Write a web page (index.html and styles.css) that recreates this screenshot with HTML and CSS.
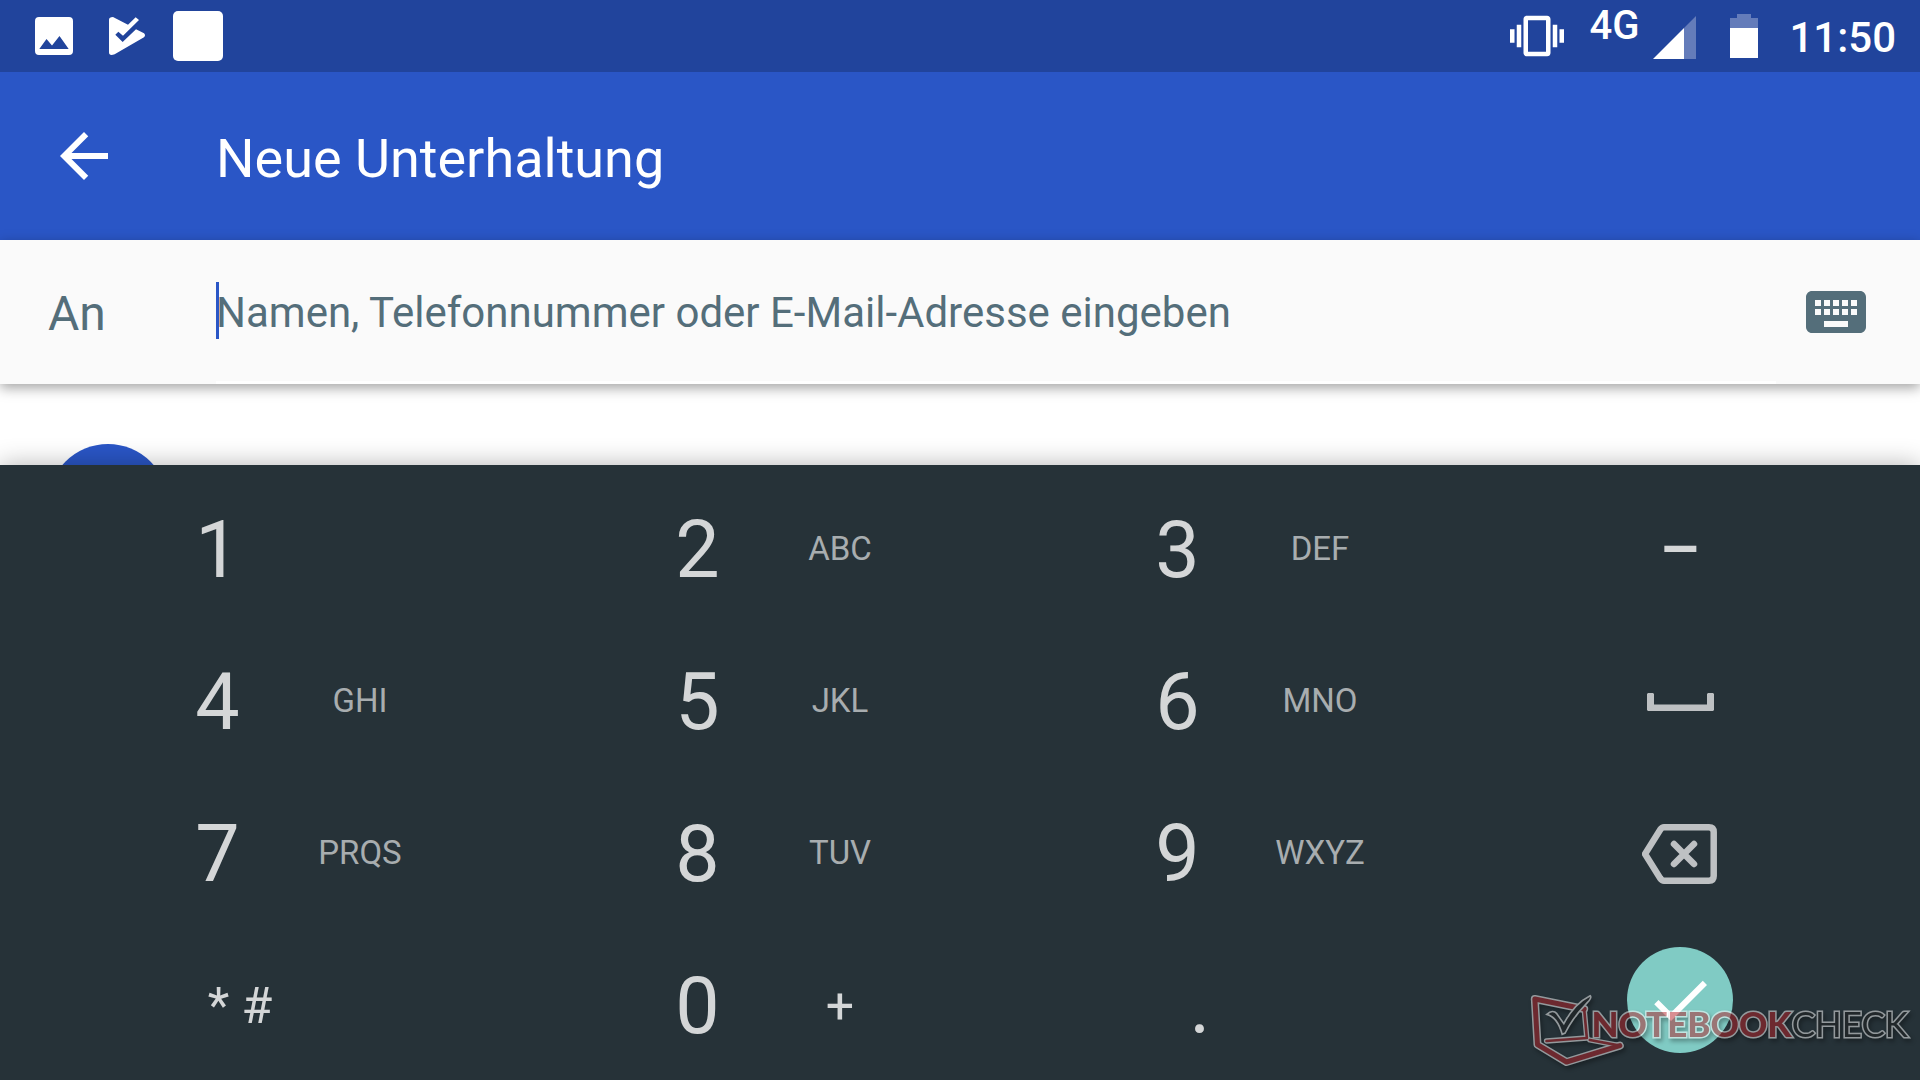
FILE: index.html
```
<!DOCTYPE html>
<html lang="de">
<head>
    <meta charset="UTF-8">
    <meta name="viewport" content="width=device-width, initial-scale=1.0">
    <title>Neue Unterhaltung</title>
    <link rel="stylesheet" href="styles.css">
</head>
<body>
    <div class="status-bar">
        <div class="notifications">
            <svg width="38" height="38" viewBox="0 0 38 38">
                <path fill="#fff" fill-rule="evenodd" d="M4 0h30q4 0 4 4v30q0 4-4 4H4q-4 0-4-4V4q0-4 4-4zM4.300 32H33.700L24.500 19 17 28.500 11.500 22z"/>
            </svg>
            <svg width="36" height="38" viewBox="0 0 108 114">
                <path fill="#fff" d="M0 8Q0 0 12 0L57 23 80 1 90 9 42 56 28 44 19 53 41 75 81 37 105 49Q111 55 105 61L17 112Q0 118 0 106z"/>
            </svg>
            <span class="blank-icon"></span>
        </div>
        <div class="system">
            <svg class="vibrate" width="54" height="54" viewBox="0 0 24 24">
                <path fill="#fff" d="M0 15h2V9H0v6zm3 2h2V7H3v10zm19-8v6h2V9h-2zm-3 8h2V7h-2v10zM16.500 3h-9C6.670 3 6 3.670 6 4.500v15c0 .83.670 1.500 1.500 1.500h9c.83 0 1.500-.67 1.500-1.500v-15c0-.83-.67-1.500-1.500-1.500zM16 19H8V5h8v14z"/>
            </svg>
            <span class="network">4G</span>
            <svg class="signal" width="43" height="43" viewBox="0 0 43 43">
                <path fill="#fff" fill-opacity=".3" d="M43 0v43H31V12z"/>
                <path fill="#fff" d="M31 12v31H0z"/>
            </svg>
            <svg class="battery" width="28" height="44" viewBox="0 0 28 44">
                <path fill="#fff" fill-opacity=".3" d="M7 0h14v4h7v10H0V4h7z"/>
                <path fill="#fff" d="M0 14h28v30H0z"/>
            </svg>
            <span class="clock">11:50</span>
        </div>
    </div>

    <header class="app-bar">
        <button class="icon-button" type="button" aria-label="Zurück">
            <svg width="72" height="72" viewBox="0 0 24 24">
                <path fill="#fff" d="M20 11H7.830l5.590-5.590L12 4l-8 8 8 8 1.410-1.410L7.830 13H20v-2z"/>
            </svg>
        </button>
        <h1>Neue Unterhaltung</h1>
    </header>

    <div class="recipient-bar">
        <label for="recipient">An</label>
        <div class="recipient-field">
            <input type="text" id="recipient" placeholder="Namen, Telefonnummer oder E-Mail-Adresse eingeben">
        </div>
        <button class="icon-button" type="button" aria-label="Tastatur">
            <svg width="72" height="72" viewBox="0 0 24 24">
                <path fill="#546e7a" d="M20 5H4c-1.100 0-2 .9-2 2v10c0 1.100.9 2 2 2h16c1.100 0 2-.9 2-2V7c0-1.100-.9-2-2-2zm-9 3h2v2h-2V8zm0 3h2v2h-2v-2zM8 8h2v2H8V8zm0 3h2v2H8v-2zm-1 2H5v-2h2v2zm0-3H5V8h2v2zm9 7H8v-2h8v2zm0-4h-2v-2h2v2zm0-3h-2V8h2v2zm3 3h-2v-2h2v2zm0-3h-2V8h2v2z"/>
            </svg>
        </button>
    </div>

    <main class="contacts">
        <div class="avatar"></div>
    </main>

    <div class="keypad">
        <button class="key" type="button"><span class="digit">1</span></button>
        <button class="key" type="button"><span class="digit">2</span><span class="letters">ABC</span></button>
        <button class="key" type="button"><span class="digit">3</span><span class="letters">DEF</span></button>
        <button class="key wide dash" type="button">–</button>

        <button class="key" type="button"><span class="digit">4</span><span class="letters">GHI</span></button>
        <button class="key" type="button"><span class="digit">5</span><span class="letters">JKL</span></button>
        <button class="key" type="button"><span class="digit">6</span><span class="letters">MNO</span></button>
        <button class="key wide" type="button" aria-label="Leerzeichen">
            <svg width="67" height="18" viewBox="0 0 67 18">
                <path fill="#bec1c3" d="M1 0h5l1 1v10.500h53V1l1-1h5l1 1v16l-1 1H1l-1-1V1z"/>
            </svg>
        </button>

        <button class="key" type="button"><span class="digit">7</span><span class="letters">PRQS</span></button>
        <button class="key" type="button"><span class="digit">8</span><span class="letters">TUV</span></button>
        <button class="key" type="button"><span class="digit">9</span><span class="letters">WXYZ</span></button>
        <button class="key wide" type="button" aria-label="Löschen">
            <svg width="76" height="60" viewBox="0 0 76 60">
                <g fill="none" stroke="#bec1c3" stroke-width="6.500">
                    <path d="M22 3.250H67Q71.700 3.250 71.700 8V52Q71.700 56.700 67 56.700H22Q20 56.700 18 54L3 30 18 6Q20 3.250 22 3.250z"/>
                    <path stroke-linecap="round" d="M32 20l20 20M52 20L32 40"/>
                </g>
            </svg>
        </button>

        <button class="key wide symbol" type="button">* #</button>
        <button class="key" type="button"><span class="digit">0</span><span class="symbol">+</span></button>
        <button class="key wide digit" type="button">.</button>
        <button class="key wide enter" type="button" aria-label="Fertig">
            <span class="enter-circle">
                <svg width="72" height="72" viewBox="0 0 24 24">
                    <path fill="#fff" d="M9 16.170L4.830 12l-1.420 1.410L9 19 21 7l-1.410-1.410z"/>
                </svg>
            </span>
        </button>
    </div>

    <div class="watermark">
        <svg width="97" height="75" viewBox="30 190 290 225">
            <g fill="none" stroke-linejoin="round" stroke-linecap="round">
                <path stroke="#fff" stroke-width="24" d="M50 208L198 238M50 208L58 345 145 397 305 348"/>
                <path stroke="#fff" stroke-width="16" d="M198 238L206 325 85 334M215 331L305 348"/>
                <path stroke="#b42228" stroke-width="15" d="M50 208L198 238M50 208L58 345 145 397 305 348"/>
                <path stroke="#b42228" stroke-width="8" d="M198 238L206 325 85 334M215 331L305 348"/>
            </g>
            <path fill="#1d1d1d" stroke="#fff" stroke-width="5" d="M86 254Q104 238 116 252L137 282Q168 222 216 198 222 204 208 218 165 262 141 310L132 314Q118 262 86 254z"/>
        </svg>
        <span class="brand"><b>NOTEBOOK</b>CHECK</span>
    </div>
</body>
</html>
```
FILE: styles.css
```
* {
    box-sizing: border-box;
}

body {
    margin: 0;
    min-height: 100vh;
    display: flex;
    flex-direction: column;
    position: relative;
    font-family: Roboto, "Liberation Sans", sans-serif;
    background-color: #fff;
}

button {
    border: none;
    padding: 0;
    background: none;
    font-family: inherit;
}

svg {
    display: block;
}

.status-bar {
    display: flex;
    justify-content: space-between;
    height: 72px;
    padding: 0 24px 0 35px;
    background-color: #21449c;
    color: #fff;
    font-weight: 500;
}

.notifications,
.system {
    display: flex;
    align-items: center;
}

.notifications {
    gap: 36px;
}

.blank-icon {
    width: 50px;
    height: 50px;
    margin-left: -8px;
    border-radius: 5px;
    background-color: #fff;
}

.network {
    align-self: flex-start;
    margin: 4px 14px 0 25px;
    font-size: 40px;
    line-height: 44px;
}

.signal {
    margin: 2px 34px 0 0;
}

.battery {
    margin-right: 31px;
}

.clock {
    padding-top: 4px;
    font-size: 42px;
    line-height: 48px;
}

.app-bar {
    display: flex;
    align-items: center;
    gap: 96px;
    height: 168px;
    padding: 0 48px;
    background-color: #2a56c6;
    color: #fff;
}

.app-bar h1 {
    margin: 0;
    padding-top: 4px;
    font-size: 54px;
    font-weight: 400;
}

.recipient-bar {
    display: flex;
    align-items: center;
    height: 144px;
    padding-right: 48px;
    background-color: #fafafa;
    color: #546e7a;
    box-shadow: 0 4px 12px rgba(0, 0, 0, 0.36);
    z-index: 1;
}

.recipient-bar label {
    width: 216px;
    padding: 2px 0 0 48px;
    font-size: 48px;
}

.recipient-field {
    position: relative;
    flex: 1;
    align-self: stretch;
    margin-right: 24px;
}

/* text cursor */
.recipient-field::before {
    content: '';
    position: absolute;
    left: 0;
    top: 42px;
    width: 3px;
    height: 57px;
    background-color: #2a56c6;
}

.recipient-field input {
    width: 100%;
    height: 100%;
    padding: 4px 0 0;
    border: none;
    border-bottom: 3px solid #fff;
    outline: none;
    background: none;
    font-family: inherit;
    font-size: 42px;
    color: #546e7a;
}

.recipient-field input::placeholder {
    color: #546e7a;
    opacity: 1;
}

.contacts {
    flex: 1 0 0;
    min-height: 81px;
    height: 0;
    padding: 60px 48px 0;
    overflow: hidden;
}

.avatar {
    width: 120px;
    height: 120px;
    border-radius: 50%;
    background-color: #2a56c6;
}

.keypad {
    display: grid;
    grid-template-columns: repeat(4, 1fr);
    grid-auto-rows: 152px;
    padding-top: 7px;
    background-color: #263238;
    box-shadow: 0 0 24px rgba(0, 0, 0, 0.3);
    z-index: 1;
}

.key {
    display: grid;
    grid-template-columns: 29fr 29fr 28fr 10fr;
    align-items: center;
    justify-items: center;
    padding-top: 4px;
    color: #d4d6d7;
}

.key .digit {
    grid-column: 2;
}

.key.wide {
    grid-template-columns: 1fr;
}

.digit {
    font-size: 79px;
}

.letters {
    padding-bottom: 4px;
    font-size: 33px;
    color: #a8adaf;
}

.symbol {
    font-size: 50px;
}

.dash {
    font-size: 64px;
    font-weight: 500;
}

.key.enter {
    padding-bottom: 12px;
}

.enter-circle {
    display: flex;
    align-items: center;
    justify-content: center;
    width: 106px;
    height: 106px;
    border-radius: 50%;
    background-color: #80cbc4;
}

.watermark {
    position: absolute;
    right: 12px;
    bottom: 12px;
    display: flex;
    align-items: flex-start;
    opacity: 0.5;
    filter: drop-shadow(2px 3px 2px rgba(0, 0, 0, 0.6));
    z-index: 2;
}

.brand {
    margin-left: -34px;
    font-family: Lato, sans-serif;
    font-size: 35px;
    line-height: 60px;
    color: #1d1d1d;
    -webkit-text-stroke: 3px #fff;
    paint-order: stroke fill;
}

.brand b {
    font-weight: 900;
    color: #b42228;
}
```
